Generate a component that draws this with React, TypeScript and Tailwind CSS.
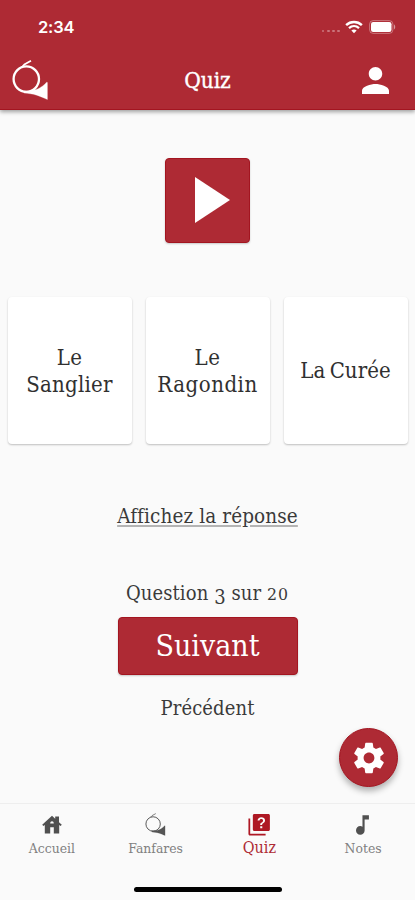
import React from "react";

const serif =
  "font-['DejaVu_Serif_Condensed','DejaVu_Serif','Liberation_Serif',serif] [font-stretch:condensed]";

function Horn({ className, stroke }: { className: string; stroke: number }) {
  return (
    <svg className={className} viewBox="0 0 37 40" fill="none" stroke="currentColor">
      <circle cx="14.3" cy="19.1" r="12.7" strokeWidth={stroke} />
      <path d="M9.6 7.6L12.4 4.4L19 .8" strokeWidth={stroke * 0.75} />
      <path
        d="M12 30.9C21 31 25 29.6 28.4 27.4C32 25.2 33.6 23.6 34.6 22.2L35.4 22.4V39.5C31.5 37.6 28.5 36.6 24.8 35.2C20.5 33.8 16 33.4 12 33Z"
        fill="currentColor"
        strokeWidth="0.3"
      />
    </svg>
  );
}

function StatusBar() {
  return (
    <div className="flex h-[54px] items-center pl-[38px] pr-[19px]">
      <span className="font-['Inter','Liberation_Sans',sans-serif] text-[16.5px] font-semibold leading-none tracking-[-0.2px]">
        2:34
      </span>
      <div className="ml-auto flex items-center">
        <div className="mr-[5px] mt-[8px] flex gap-[2.6px] opacity-35">
          {[0, 1, 2, 3].map((i) => (
            <i key={i} className="size-[2.6px] rounded-full bg-white" />
          ))}
        </div>
        <svg className="h-[14px] w-[18px]" viewBox="0 0 19 14" fill="none" stroke="white">
          <path d="M1.2 5C5.9.6 13.1.6 17.8 5" strokeWidth="2.6" />
          <path d="M4.2 8.2C7.3 5.4 11.7 5.4 14.8 8.2" strokeWidth="2.4" />
          <path d="M6.7 10.8C8.3 9.3 10.7 9.3 12.3 10.8L9.5 13.7Z" fill="white" stroke="none" />
        </svg>
        <svg className="ml-[6px] h-[14px] w-[27px]" viewBox="0 0 27 14">
          <rect x=".6" y=".6" width="23.3" height="12.8" rx="3.6" fill="none" stroke="white" strokeOpacity=".35" />
          <rect x="2" y="2" width="20.5" height="10" rx="2.2" fill="white" />
          <path d="M25 4.6c1.6.6 1.6 4.2 0 4.8Z" fill="white" fillOpacity=".5" />
        </svg>
      </div>
    </div>
  );
}

function Card({ lines, text }: { lines: string[]; text: string }) {
  return (
    <button
      className={
        "flex h-[147px] w-[124px] flex-col items-center justify-center rounded-[4px] bg-white leading-[27px] text-[#303030] shadow-[0_1px_2px_rgba(0,0,0,0.24)] " +
        text
      }
    >
      {lines.map((l) => (
        <span key={l} className="whitespace-nowrap">
          {l}
        </span>
      ))}
    </button>
  );
}

function Tab({ children, label, text }: { children: React.ReactNode; label: string; text: string }) {
  return (
    <div className={"flex w-[103.75px] flex-col items-center " + text}>
      <div className="flex h-[25px] items-center">{children}</div>
      <span className="whitespace-nowrap">{label}</span>
    </div>
  );
}

export default function App() {
  return (
    <div className={"relative flex h-[900px] w-[415px] flex-col overflow-hidden bg-[#fafafa] " + serif}>
      <header className="z-10 h-[110px] shrink-0 border-b border-[#a31520] bg-[#ae2a34] text-white shadow-[0_2px_4px_rgba(0,0,0,0.36)]">
        <StatusBar />
        <div className="flex h-[52px] items-center justify-between pl-[12px] pr-[26px]">
          <Horn className="h-[40px] w-[37px]" stroke={2.3} />
          <h1 className="ml-[4px] mt-[1px] text-[22.5px] font-medium tracking-[-0.1px] [-webkit-text-stroke:0.35px_white]">
            Quiz
          </h1>
          <svg className="h-[27px] w-[27px]" viewBox="4 4 16 16" fill="white">
            <path d="M12 12c2.21 0 4-1.79 4-4s-1.79-4-4-4-4 1.79-4 4 1.79 4 4 4zm0 2c-2.67 0-8 1.34-8 4v2h16v-2c0-2.66-5.33-4-8-4z" />
          </svg>
        </div>
      </header>

      <main className="flex flex-1 flex-col items-center">
        <button className="mt-[48px] flex size-[85px] items-center justify-center rounded-[4px] border border-[#a31520] bg-[#ae2a34] shadow-[0_1px_2px_rgba(0,0,0,0.2)]">
          <svg className="mb-[1px] ml-[9px] h-[46px] w-[35px]" viewBox="0 0 35 46" fill="white">
            <path d="M0 0L35 23L0 46Z" />
          </svg>
        </button>

        <div className="mt-[54px] flex gap-[14px]">
          <Card lines={["Le", "Sanglier"]} text="text-[22px] tracking-[0.25px]" />
          <Card lines={["Le", "Ragondin"]} text="text-[22px] tracking-[0.5px]" />
          <Card lines={["La Curée"]} text="text-[22px] [word-spacing:-2px] tracking-[0.05px]" />
        </div>

        <a className="mt-[58px] whitespace-nowrap text-[20.5px] leading-[28px] tracking-[0.1px] text-[#3a3a3a] underline decoration-[#b4b4b4] decoration-2 underline-offset-[2px]">
          Affichez la réponse
        </a>
        <p className="mt-[49px] h-[28px] whitespace-nowrap text-[20px] leading-[28px] tracking-[0.1px] text-[#3a3a3a]">
          Question <span className="relative top-[4px]">3</span> sur{" "}
          <span className="text-[17.5px] tracking-[1px]">20</span>
        </p>
        <button className="mt-[10px] flex h-[58px] w-[180px] shrink-0 items-center justify-center rounded-[4px] border border-[#a31520] bg-[#ae2a34] text-[30px] leading-[36px] text-white shadow-[0_1px_2px_rgba(0,0,0,0.2)]">
          Suivant
        </button>
        <button className="mt-[19px] whitespace-nowrap text-[20px] leading-[28px] tracking-[0.1px] text-[#3a3a3a]">
          Précédent
        </button>
      </main>

      <button className="absolute left-[339px] top-[728px] flex size-[59px] items-center justify-center rounded-full border border-[#a31520] bg-[#ae2a34] shadow-[0_4px_6px_rgba(0,0,0,0.3)]">
        <svg className="size-[38px]" viewBox="0 0 24 24" fill="white">
          <path d="M19.14 12.94c.04-.3.06-.61.06-.94 0-.32-.02-.64-.07-.94l2.03-1.58c.18-.14.23-.41.12-.61l-1.92-3.32c-.12-.22-.37-.29-.59-.22l-2.39.96c-.5-.38-1.03-.7-1.62-.94l-.36-2.54c-.04-.24-.24-.41-.48-.41h-3.84c-.24 0-.43.17-.47.41l-.36 2.54c-.59.24-1.13.57-1.62.94l-2.39-.96c-.22-.08-.47 0-.59.22L2.74 8.87c-.12.21-.08.47.12.61l2.03 1.58c-.05.3-.09.63-.09.94s.02.64.07.94l-2.03 1.58c-.18.14-.23.41-.12.61l1.92 3.32c.12.22.37.29.59.22l2.39-.96c.5.38 1.03.7 1.62.94l.36 2.54c.05.24.24.41.48.41h3.84c.24 0 .44-.17.47-.41l.36-2.54c.59-.24 1.13-.56 1.62-.94l2.39.96c.22.08.47 0 .59-.22l1.92-3.32c.12-.22.07-.47-.12-.61l-2.01-1.58zM12 15.4c-1.88 0-3.4-1.52-3.4-3.4s1.52-3.4 3.4-3.4 3.4 1.52 3.4 3.4-1.52 3.4-3.4 3.4z" />
        </svg>
      </button>

      <nav className="flex h-[84px] shrink-0 border-t border-[#eeeeee] pt-[8px]">
        <Tab label="Accueil" text="text-[13.8px] leading-[22px] text-[#808080]">
          <svg className="h-[19px] w-[20px]" viewBox="0 0 20 19" fill="#505050">
            <path d="M10 .8L13.2 3.7V1.4H17V7.2L19.8 9.8L18.6 11L17.2 10V18.5H11.8V12.2H8.2V18.5H2.8V10L1.4 11L.2 9.8Z" />
            <path d="M8.2 8.6c0-3 3.6-3 3.6 0Z" fill="#fafafa" />
          </svg>
        </Tab>
        <Tab label="Fanfares" text="text-[13.8px] leading-[22px] text-[#808080]">
          <Horn className="h-[23px] w-[21px] text-[#555]" stroke={1.7} />
        </Tab>
        <Tab label="Quiz" text="text-[16px] leading-[21px] text-[#ae2a34]">
          <svg className="h-[22px] w-[22px]" viewBox="2 2 20 20" fill="#ae1824">
            <path d="M4 6H2.4v14.2c0 .8.6 1.4 1.4 1.4H18V20H4V6z" />
            <path
              fillRule="evenodd"
              d="M20.5 2H7.8C7 2 6.4 2.6 6.4 3.4v12.7c0 .8.6 1.4 1.4 1.4h12.7c.8 0 1.4-.6 1.4-1.4V3.4c0-.8-.6-1.4-1.4-1.4zM13.1 15v-1.8H15V15h-1.9zm0-3V11.2c0-1.3 2.6-1.6 2.6-3.4 0-.8-.7-1.3-1.6-1.3-1 0-1.6.6-1.6 1.5h-1.8c0-2 1.5-3.1 3.4-3.1s3.4 1.1 3.4 2.9c0 2.3-2.6 2.5-2.6 3.7V12h-1.8z"
            />
          </svg>
        </Tab>
        <Tab label="Notes" text="text-[13.8px] leading-[22px] text-[#808080]">
          <svg className="h-[20px] w-[14px]" viewBox="6 3 13 18" fill="#505050">
            <path d="M12 3v10.55c-.59-.34-1.27-.55-2-.55-2.21 0-4 1.79-4 4s1.79 4 4 4 4-1.79 4-4V7h4V3h-6z" />
          </svg>
        </Tab>
      </nav>
      <div className="flex h-[13px] shrink-0 justify-center">
        <div className="h-[5px] w-[148px] rounded-full bg-black" />
      </div>
    </div>
  );
}
